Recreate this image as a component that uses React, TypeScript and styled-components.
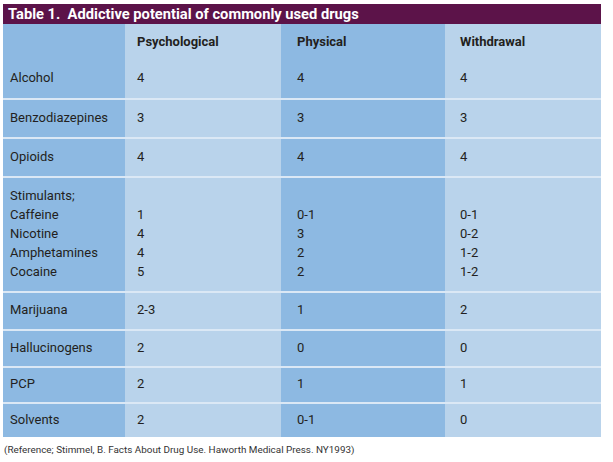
import styled, { createGlobalStyle } from "styled-components";

const GlobalStyle = createGlobalStyle`
  body {
    margin: 0;
    background: #ffffff;
    font-family: Roboto, "Liberation Sans", sans-serif;
  }
`;

const Page = styled.div`
  padding: 4px 12px 0 3px;
  width: 598px;
`;

const Title = styled.div`
  height: 20px;
  background: #5c1349;
  color: #ffffff;
  font-weight: 700;
  font-size: 14.7px;
  line-height: 20px;
  padding-left: 5px;
  white-space: pre;
`;

const Row = styled.div<{ $h: number; $sep?: boolean }>`
  display: grid;
  grid-template-columns: 122px 156px 164px 156px;
  height: ${(p) => p.$h}px;
  border-top: ${(p) => (p.$sep ? "2px solid #dbe8f5" : "none")};
`;

const Cell = styled.div<{ $light?: boolean; $pad: number; $bold?: boolean }>`
  background: ${(p) => (p.$light ? "#b9d3eb" : "#8db9e2")};
  color: #231f20;
  font-size: 13px;
  font-weight: ${(p) => (p.$bold ? 700 : 400)};
  padding-left: ${(p) => p.$pad}px;
  padding-bottom: ${(p) => (p.$bold ? 1 : 3)}px;
  display: flex;
  flex-direction: column;
  justify-content: center;
  line-height: 19px;
`;

const Footer = styled.div`
  margin-top: 7px;
  padding-left: 1px;
  font-size: 9.9px;
  color: #333333;
`;

const pads = [7, 12, 16, 15];

type RowData = { h: number; cells: string[][] };

const rows: RowData[] = [
  { h: 38, cells: [["Alcohol"], ["4"], ["4"], ["4"]] },
  { h: 37, cells: [["Benzodiazepines"], ["3"], ["3"], ["3"]] },
  { h: 37, cells: [["Opioids"], ["4"], ["4"], ["4"]] },
  {
    h: 113,
    cells: [
      ["Stimulants;", "Caffeine", "Nicotine", "Amphetamines", "Cocaine"],
      ["\u00a0", "1", "4", "4", "5"],
      ["\u00a0", "0-1", "3", "2", "2"],
      ["\u00a0", "0-1", "0-2", "1-2", "1-2"],
    ],
  },
  { h: 36, cells: [["Marijuana"], ["2-3"], ["1"], ["2"]] },
  { h: 35, cells: [["Hallucinogens"], ["2"], ["0"], ["0"]] },
  { h: 34, cells: [["PCP"], ["2"], ["1"], ["1"]] },
  { h: 33, cells: [["Solvents"], ["2"], ["0-1"], ["0"]] },
];

const headers = ["", "Psychological", "Physical", "Withdrawal"];

export default function App() {
  return (
    <>
      <GlobalStyle />
      <Page>
        <Title>{"Table 1.  Addictive potential of commonly used drugs"}</Title>
        <Row $h={36}>
          {headers.map((h, i) => (
            <Cell key={i} $light={i % 2 === 1} $pad={pads[i]} $bold>
              {h}
            </Cell>
          ))}
        </Row>
        {rows.map((r, ri) => (
          <Row key={ri} $h={r.h} $sep={ri > 0}>
            {r.cells.map((lines, ci) => (
              <Cell key={ci} $light={ci % 2 === 1} $pad={pads[ci]}>
                {lines.map((l, li) => (
                  <span key={li}>{l}</span>
                ))}
              </Cell>
            ))}
          </Row>
        ))}
        <Footer>(Reference; Stimmel, B. Facts About Drug Use. Haworth Medical Press. NY1993)</Footer>
      </Page>
    </>
  );
}
